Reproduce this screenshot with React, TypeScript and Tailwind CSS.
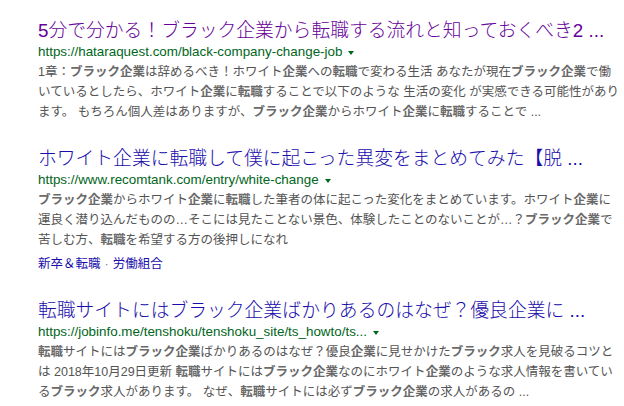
import React from 'react';

type Seg = string | { b: string };

interface Result {
  title: string;
  visited?: boolean;
  url: string;
  lines: Seg[][];
  sitelinks?: string[];
}

const results: Result[] = [
  {
    title: '5分で分かる！ブラック企業から転職する流れと知っておくべき2 ...',
    visited: true,
    url: 'https://hataraquest.com/black-company-change-job',
    lines: [
      ['1章：', { b: 'ブラック企業' }, 'は辞めるべき！ホワイト', { b: '企業' }, 'への', { b: '転職' }, 'で変わる生活 あなたが現在', { b: 'ブラック企業' }, 'で働'],
      ['いているとしたら、ホワイト', { b: '企業' }, 'に', { b: '転職' }, 'することで以下のような 生活の変化 が実感できる可能性があり'],
      ['ます。 もちろん個人差はありますが、', { b: 'ブラック企業' }, 'からホワイト', { b: '企業' }, 'に', { b: '転職' }, 'することで ...'],
    ],
  },
  {
    title: 'ホワイト企業に転職して僕に起こった異変をまとめてみた【脱 ...',
    url: 'https://www.recomtank.com/entry/white-change',
    lines: [
      [{ b: 'ブラック企業' }, 'からホワイト', { b: '企業' }, 'に', { b: '転職' }, 'した筆者の体に起こった変化をまとめています。ホワイト', { b: '企業' }, 'に'],
      ['運良く潜り込んだものの…そこには見たことない景色、体験したことのないことが…？', { b: 'ブラック企業' }, 'で'],
      ['苦しむ方、', { b: '転職' }, 'を希望する方の後押しになれ'],
    ],
    sitelinks: ['新卒＆転職', '労働組合'],
  },
  {
    title: '転職サイトにはブラック企業ばかりあるのはなぜ？優良企業に ...',
    url: 'https://jobinfo.me/tenshoku/tenshoku_site/ts_howto/ts...',
    lines: [
      [{ b: '転職' }, 'サイトには', { b: 'ブラック企業' }, 'ばかりあるのはなぜ？優良', { b: '企業' }, 'に見せかけた', { b: 'ブラック' }, '求人を見破るコツと'],
      ['は 2018年10月29日更新 ', { b: '転職' }, 'サイトには', { b: 'ブラック企業' }, 'なのにホワイト', { b: '企業' }, 'のような求人情報を書いてい'],
      ['る', { b: 'ブラック' }, '求人があります。 なぜ、', { b: '転職' }, 'サイトには必ず', { b: 'ブラック企業' }, 'の求人があるの ...'],
    ],
  },
];

const SearchResult: React.FC<{ r: Result }> = ({ r }) => (
  <div className="mb-[26px]">
    <a
      className={`block whitespace-nowrap text-[18.8px] font-light leading-[22px] ${r.visited ? 'text-[#660099]' : 'text-[#1a0dab]'}`}
    >
      {r.title}
    </a>
    <div className="flex items-center h-[20px] whitespace-nowrap">
      <cite className="not-italic text-[13.4px] text-[#006621]">{r.url}</cite>
      {/* dropdown arrow */}
      <span className="ml-[6px] mt-[2px] w-0 h-0 border-x-[3.5px] border-x-transparent border-t-[4px] border-t-[#006621]" />
    </div>
    <div className="text-[12.5px] leading-[20px] text-[#545454]">
      {r.lines.map((line, i) => (
        <div key={i} className="whitespace-nowrap">
          {line.map((s, j) =>
            typeof s === 'string' ? (
              <span key={j}>{s}</span>
            ) : (
              <b key={j} className="font-semibold text-[#6a6a6a]">
                {s.b}
              </b>
            )
          )}
        </div>
      ))}
    </div>
    {r.sitelinks && (
      <div className="mt-[4px] text-[12.5px] leading-[20px] text-[#1a0dab] whitespace-nowrap">
        {r.sitelinks.map((s, i) => (
          <React.Fragment key={i}>
            {i > 0 && <span className="text-[#808080] px-[4px]">·</span>}
            <a>{s}</a>
          </React.Fragment>
        ))}
      </div>
    )}
  </div>
);

export default function App() {
  return (
    <div className="w-[624px] h-[406px] overflow-hidden bg-white pl-[38px] pt-[20px] font-['Liberation_Sans','Noto_Sans_CJK_JP',sans-serif]">
      {results.map((r, i) => (
        <SearchResult key={i} r={r} />
      ))}
    </div>
  );
}
